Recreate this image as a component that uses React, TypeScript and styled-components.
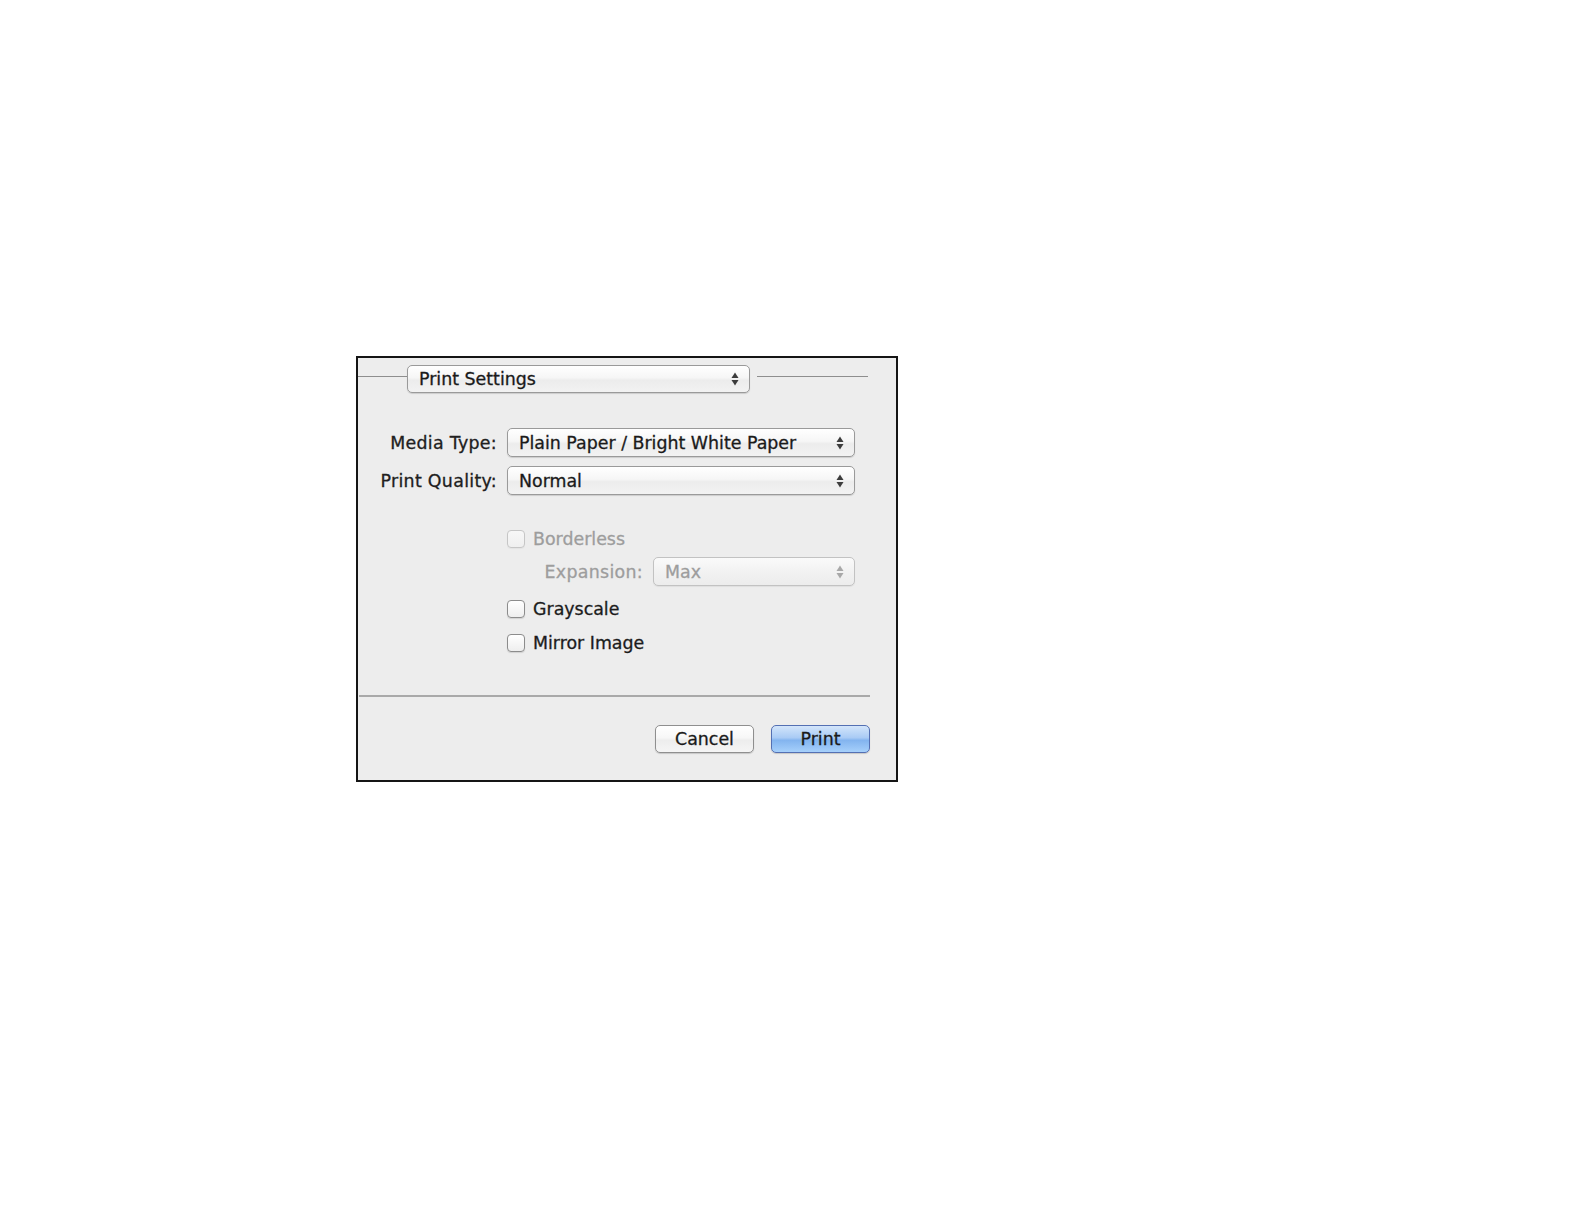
import React from "react";
import styled, { createGlobalStyle } from "styled-components";

const Global = createGlobalStyle`
  html, body { margin: 0; padding: 0; background: #ffffff; }
  body { font-family: "DejaVu Sans", "Liberation Sans", sans-serif; }
  * { box-sizing: border-box; }
`;

const Page = styled.div`
  width: 1585px;
  height: 1225px;
  padding: 356px 0 0 356px;
  background: #ffffff;
`;

const Dialog = styled.div`
  width: 542px;
  border: 2px solid #151515;
  background: #ededed;
  display: flex;
  flex-direction: column;
  padding-bottom: 27px;
  font-size: 17.4px;
  color: #1e1e1e;
  -webkit-text-stroke: 0.3px currentColor;
`;

const Header = styled.div`
  display: flex;
  align-items: flex-start;
  margin-top: 7px;
  padding-right: 28px;
`;

const HeaderLine = styled.div<{ $w?: number }>`
  height: 1px;
  margin-top: 11px;
  background: #8e8e8e;
  ${(p) => (p.$w ? `width: ${p.$w}px;` : "flex: 1;")}
`;

const PopUp = styled.div<{ $w: number; $disabled?: boolean }>`
  width: ${(p) => p.$w}px;
  height: ${(p) => (p.$disabled ? 29 : 28)}px;
  display: flex;
  align-items: center;
  justify-content: space-between;
  padding: 0 10px 0 11px;
  border: 1px solid ${(p) => (p.$disabled ? "#c2c2c2" : "#9a9a9a")};
  border-radius: 5px;
  background: ${(p) =>
    p.$disabled
      ? "linear-gradient(#fafafa, #f2f2f2 50%, #ececec)"
      : "linear-gradient(#ffffff, #f6f6f6 45%, #ececec 55%, #f2f2f2)"};
  box-shadow: 0 1px 1px rgba(0, 0, 0, ${(p) => (p.$disabled ? 0.06 : 0.14)});
  color: ${(p) => (p.$disabled ? "#9d9d9d" : "#1a1a1a")};
  white-space: nowrap;
`;

const FieldPopUp = styled(PopUp)`
  height: 29px;
`;

const Arrows = ({ disabled }: { disabled?: boolean }) => (
  <svg width="8" height="14" viewBox="0 0 8 14">
    <path d="M4 0.5 L7.5 6 L0.5 6 Z" fill={disabled ? "#a8a8a8" : "#3c3c3c"} />
    <path d="M4 13.5 L7.5 8 L0.5 8 Z" fill={disabled ? "#a8a8a8" : "#3c3c3c"} />
  </svg>
);

const Form = styled.div`
  display: grid;
  grid-template-columns: 139px 348px;
  column-gap: 10px;
  row-gap: 9px;
  margin-top: 35px;
  align-items: center;
`;

const Label = styled.div<{ $disabled?: boolean }>`
  text-align: right;
  white-space: nowrap;
  letter-spacing: 0.3px;
  color: ${(p) => (p.$disabled ? "#9d9d9d" : "#202020")};
`;

const Options = styled.div`
  display: flex;
  flex-direction: column;
  margin: 35px 0 0 149px;
  width: 348px;
`;

const CheckRow = styled.label<{ $top?: number; $disabled?: boolean }>`
  display: flex;
  align-items: center;
  gap: 8px;
  height: 18px;
  line-height: 18px;
  margin-top: ${(p) => p.$top ?? 0}px;
  color: ${(p) => (p.$disabled ? "#9d9d9d" : "#1c1c1c")};
`;

const Box = styled.span<{ $disabled?: boolean }>`
  width: 18px;
  height: 18px;
  flex: none;
  border: 1px solid ${(p) => (p.$disabled ? "#c6c6c6" : "#8c8c8c")};
  border-radius: 4px;
  background: ${(p) =>
    p.$disabled ? "linear-gradient(#f7f7f7, #efefef)" : "linear-gradient(#ffffff, #eeeeee)"};
  box-shadow: 0 1px 1px rgba(0, 0, 0, ${(p) => (p.$disabled ? 0.04 : 0.12)});
`;

const SubRow = styled.div`
  display: flex;
  align-items: center;
  justify-content: flex-end;
  gap: 10px;
  margin-top: 9px;
`;

const Separator = styled.div`
  height: 2px;
  margin: 43px 26px 0 1px;
  background: #a9a9a9;
`;

const Buttons = styled.div`
  display: flex;
  justify-content: flex-end;
  gap: 17px;
  margin-top: 28px;
  padding-right: 26px;
`;

const Button = styled.button<{ $primary?: boolean }>`
  width: 99px;
  height: 28px;
  padding: 0;
  font: inherit;
  font-size: 17.4px;
  color: #1a1a1a;
  -webkit-text-stroke: 0.3px currentColor;
  border-radius: 5px;
  border: 1px solid ${(p) => (p.$primary ? "#5470b3" : "#8f8f8f")};
  background: ${(p) =>
    p.$primary
      ? "linear-gradient(#d3e5fb, #a9cbf5 45%, #83b4ef 55%, #a6d0fb)"
      : "linear-gradient(#ffffff, #f7f7f7 45%, #ededed 55%, #f5f5f5)"};
  box-shadow: 0 1px 1px rgba(0, 0, 0, 0.16);
`;

export default function App() {
  return (
    <>
      <Global />
      <Page>
        <Dialog>
          <Header>
            <HeaderLine $w={49} />
            <PopUp $w={343}>
              <span>Print Settings</span>
              <Arrows />
            </PopUp>
            <HeaderLine style={{ marginLeft: 7 }} />
          </Header>

          <Form>
            <Label>Media Type:</Label>
            <FieldPopUp $w={348}>
              <span>Plain Paper / Bright White Paper</span>
              <Arrows />
            </FieldPopUp>
            <Label>Print Quality:</Label>
            <FieldPopUp $w={348}>
              <span>Normal</span>
              <Arrows />
            </FieldPopUp>
          </Form>

          <Options>
            <CheckRow $disabled>
              <Box $disabled />
              Borderless
            </CheckRow>
            <SubRow>
              <Label $disabled>Expansion:</Label>
              <PopUp $w={202} $disabled>
                <span>Max</span>
                <Arrows disabled />
              </PopUp>
            </SubRow>
            <CheckRow $top={14}>
              <Box />
              Grayscale
            </CheckRow>
            <CheckRow $top={16}>
              <Box />
              Mirror Image
            </CheckRow>
          </Options>

          <Separator />

          <Buttons>
            <Button>Cancel</Button>
            <Button $primary>Print</Button>
          </Buttons>
        </Dialog>
      </Page>
    </>
  );
}
